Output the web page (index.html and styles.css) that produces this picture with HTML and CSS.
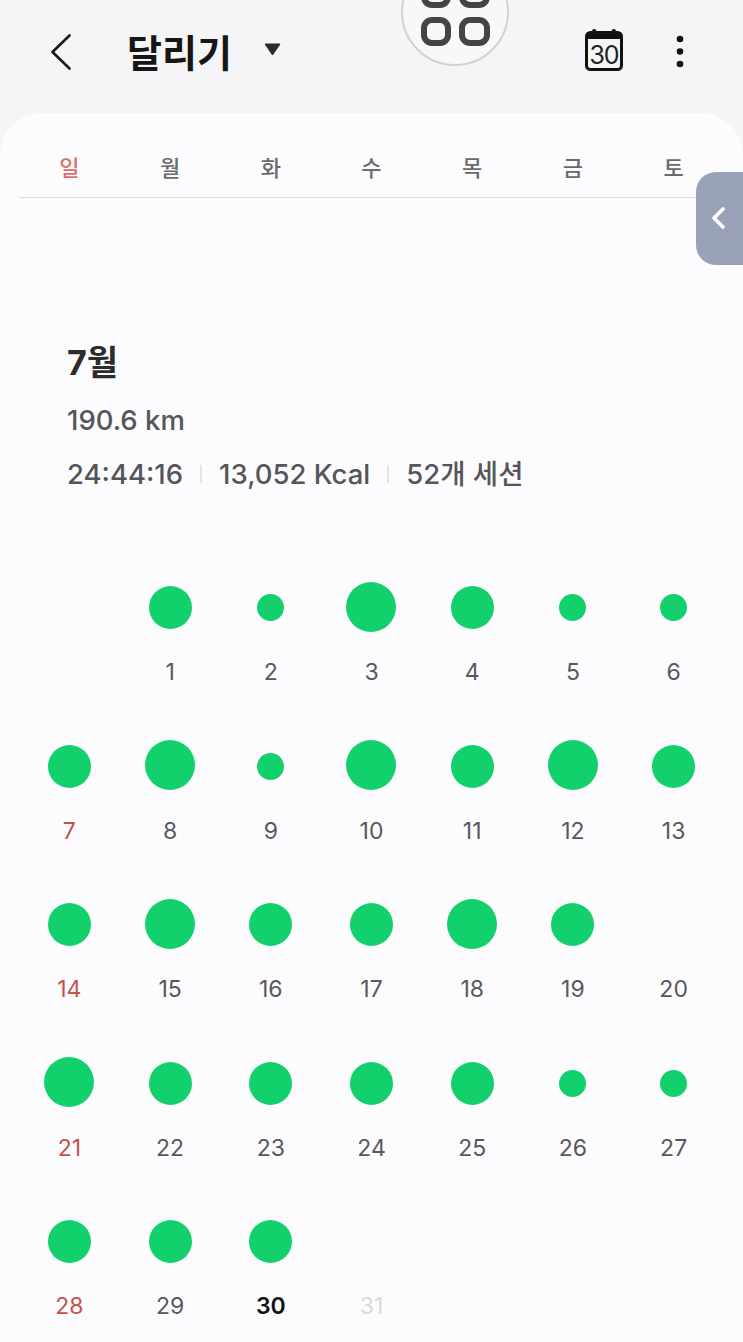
FILE: index.html
```html
<!DOCTYPE html>
<html lang="ko">
<head>
    <meta charset="utf-8">
    <title>달리기</title>
    <link rel="stylesheet" href="styles.css">
</head>
<body>
    <div class="page">
        <header class="top">
            <svg class="back" width="20" height="36" viewBox="0 0 20 36">
                <path d="M18.5 1.5 L1.5 18 L18.5 34.5" fill="none" stroke="#1a1a1a" stroke-width="2.6" stroke-linecap="round" stroke-linejoin="round"/>
            </svg>
            <h1 class="title">달리기</h1>
            <svg class="caret" width="17" height="13" viewBox="0 0 17 13">
                <path d="M1 1 H16 L8.5 12 Z" fill="#2b2b2b" stroke="#2b2b2b" stroke-width="1" stroke-linejoin="round"/>
            </svg>
            <div class="cal">
                <svg class="cal-frame" width="38" height="42" viewBox="0 0 38 42">
                    <rect x="1.5" y="3.5" width="35" height="37" rx="4" fill="none" stroke="#111" stroke-width="3"/>
                    <rect x="1.5" y="3" width="35" height="7" rx="2.5" fill="#111"/>
                    <rect x="7" y="0" width="4.5" height="6" rx="2.2" fill="#111"/>
                    <rect x="26.5" y="0" width="4.5" height="6" rx="2.2" fill="#111"/>
                </svg>
                <span class="cal-num">30</span>
            </div>
            <svg class="more" width="8" height="33" viewBox="0 0 8 33">
                <circle cx="4" cy="4" r="3.3" fill="#111"/>
                <circle cx="4" cy="16.5" r="3.3" fill="#111"/>
                <circle cx="4" cy="29" r="3.3" fill="#111"/>
            </svg>
        </header>

        <div class="fab">
            <svg width="108" height="54" viewBox="0 0 108 54">
                <g fill="none" stroke="#444" stroke-width="6">
                    <rect x="23" y="-18" width="24" height="23" rx="8"/>
                    <rect x="61" y="-18" width="25" height="23" rx="8"/>
                    <rect x="23" y="20" width="24" height="23" rx="8"/>
                    <rect x="61" y="20" width="25" height="23" rx="8"/>
                </g>
            </svg>
        </div>

        <main class="card">
            <div class="weekdays">
                <span class="sun">일</span>
                <span>월</span>
                <span>화</span>
                <span>수</span>
                <span>목</span>
                <span>금</span>
                <span>토</span>
            </div>

            <section class="summary">
                <h2 class="month">7월</h2>
                <p class="stat">190.6 km</p>
                <p class="stat stat-row">
                    <span>24:44:16</span>
                    <i class="sep"></i>
                    <span>13,052 Kcal</span>
                    <i class="sep"></i>
                    <span>52개 세션</span>
                </p>
            </section>

            <div class="days">
                <div class="day"></div>
                <div class="day"><b class="dot m"></b><span>1</span></div>
                <div class="day"><b class="dot s"></b><span>2</span></div>
                <div class="day"><b class="dot l"></b><span>3</span></div>
                <div class="day"><b class="dot m"></b><span>4</span></div>
                <div class="day"><b class="dot s"></b><span>5</span></div>
                <div class="day"><b class="dot s"></b><span>6</span></div>

                <div class="day red"><b class="dot m"></b><span>7</span></div>
                <div class="day"><b class="dot l"></b><span>8</span></div>
                <div class="day"><b class="dot s"></b><span>9</span></div>
                <div class="day"><b class="dot l"></b><span>10</span></div>
                <div class="day"><b class="dot m"></b><span>11</span></div>
                <div class="day"><b class="dot l"></b><span>12</span></div>
                <div class="day"><b class="dot m"></b><span>13</span></div>

                <div class="day red"><b class="dot m"></b><span>14</span></div>
                <div class="day"><b class="dot l"></b><span>15</span></div>
                <div class="day"><b class="dot m"></b><span>16</span></div>
                <div class="day"><b class="dot m"></b><span>17</span></div>
                <div class="day"><b class="dot l"></b><span>18</span></div>
                <div class="day"><b class="dot m"></b><span>19</span></div>
                <div class="day"><b class="dot none"></b><span>20</span></div>

                <div class="day red"><b class="dot l"></b><span>21</span></div>
                <div class="day"><b class="dot m"></b><span>22</span></div>
                <div class="day"><b class="dot m"></b><span>23</span></div>
                <div class="day"><b class="dot m"></b><span>24</span></div>
                <div class="day"><b class="dot m"></b><span>25</span></div>
                <div class="day"><b class="dot s"></b><span>26</span></div>
                <div class="day"><b class="dot s"></b><span>27</span></div>

                <div class="day red"><b class="dot m"></b><span>28</span></div>
                <div class="day"><b class="dot m"></b><span>29</span></div>
                <div class="day today"><b class="dot m"></b><span>30</span></div>
                <div class="day future"><b class="dot none"></b><span>31</span></div>
            </div>
        </main>

        <div class="side-tab">
            <svg width="16" height="24" viewBox="0 0 16 24">
                <path d="M13 3 L4 12 L13 21" fill="none" stroke="#fff" stroke-width="3.6" stroke-linecap="round" stroke-linejoin="round"/>
            </svg>
        </div>
    </div>
</body>
</html>
```

FILE: styles.css
```css
* {
    box-sizing: border-box;
}

html, body {
    margin: 0;
    padding: 0;
}

body {
    font-family: Inter, "Noto Sans CJK KR", sans-serif;
    background-color: #f5f5f7;
}

.page {
    position: relative;
    height: 1342px;
    overflow: hidden;
}

/* top bar */
.top {
    display: flex;
    align-items: center;
    height: 113px;
    padding: 0 59px 10px 51px;
}

.title {
    margin: 2px 0 0 56px;
    font-size: 38px;
    font-weight: 700;
    line-height: 44px;
    color: #161616;
}

.caret {
    margin: 0 0 4px 32px;
}

.cal {
    position: relative;
    width: 38px;
    height: 42px;
    margin-left: auto;
    margin-top: -4px;
}

.cal-frame {
    display: block;
}

.cal-num {
    position: absolute;
    left: 0;
    right: 0;
    top: 14px;
    text-align: center;
    font-size: 25px;
    line-height: 24px;
    letter-spacing: -1px;
    color: #222;
}

.more {
    margin-left: 53px;
    margin-top: -1px;
}

/* app grid button, sits over the top bar */
.fab {
    position: absolute;
    left: 401px;
    top: -42px;
    width: 108px;
    height: 108px;
    border: 2px solid #d2d2d4;
    border-radius: 50%;
    background-color: #f8f8fa;
}

.fab svg {
    position: absolute;
    left: -2px;
    top: 40px;
    overflow: visible;
}

/* main card */
.card {
    height: 1229px;
    background-color: #fcfcfe;
    border-radius: 42px 42px 0 0;
    padding: 0 19px;
}

.weekdays {
    display: grid;
    grid-template-columns: repeat(7, 1fr);
    padding: 38px 0 12px;
    border-bottom: 1.5px solid #dedee2;
    font-size: 22px;
    font-weight: 500;
    line-height: 34px;
    text-align: center;
    color: #6a6a6c;
}

.weekdays .sun {
    color: #d9706c;
}

.summary {
    padding: 145px 0 0 48px;
    color: #55555a;
}

.month {
    margin: 0 0 19px;
    font-size: 34px;
    font-weight: 700;
    line-height: 40px;
    color: #2c2c2e;
}

.stat {
    margin: 0 0 18px;
    font-size: 27.5px;
    font-weight: 550;
    line-height: 36px;
}

.stat-row {
    display: flex;
    align-items: center;
    margin-bottom: 0;
}

.sep {
    width: 2px;
    height: 18px;
    margin: 0 17px;
    background-color: #e4e4e6;
}

/* month grid */
.days {
    display: grid;
    grid-template-columns: repeat(7, 1fr);
    grid-auto-rows: 158.5px;
    margin-top: 90.5px;
}

.day {
    display: flex;
    flex-direction: column;
    align-items: center;
    font-size: 23px;
    line-height: 30px;
    color: #58585c;
}

.day span {
    margin-top: 24.5px;
}

.dot {
    display: block;
    height: 50px;
    background-color: #12d16c;
    border-radius: 50%;
}

.dot.l {
    width: 50px;
    margin: -1px 0 1px;
}

.dot.m {
    width: 43px;
    height: 43px;
    margin: 3.5px 0;
}

.dot.s {
    width: 27px;
    height: 27px;
    margin: 11.5px 0;
}

.dot.none {
    background: none;
}

.day.red {
    color: #c2524e;
}

.day.today {
    font-weight: 600;
    color: #111;
}

.day.future {
    color: #d9d9db;
}

/* side panel handle */
.side-tab {
    position: absolute;
    right: 0;
    top: 172px;
    display: flex;
    align-items: center;
    width: 47px;
    height: 93px;
    padding: 0 0 0 14px;
    background-color: #99a2b8;
    border-radius: 20px 0 0 20px;
}

.side-tab svg {
    margin-bottom: 2px;
}
```
